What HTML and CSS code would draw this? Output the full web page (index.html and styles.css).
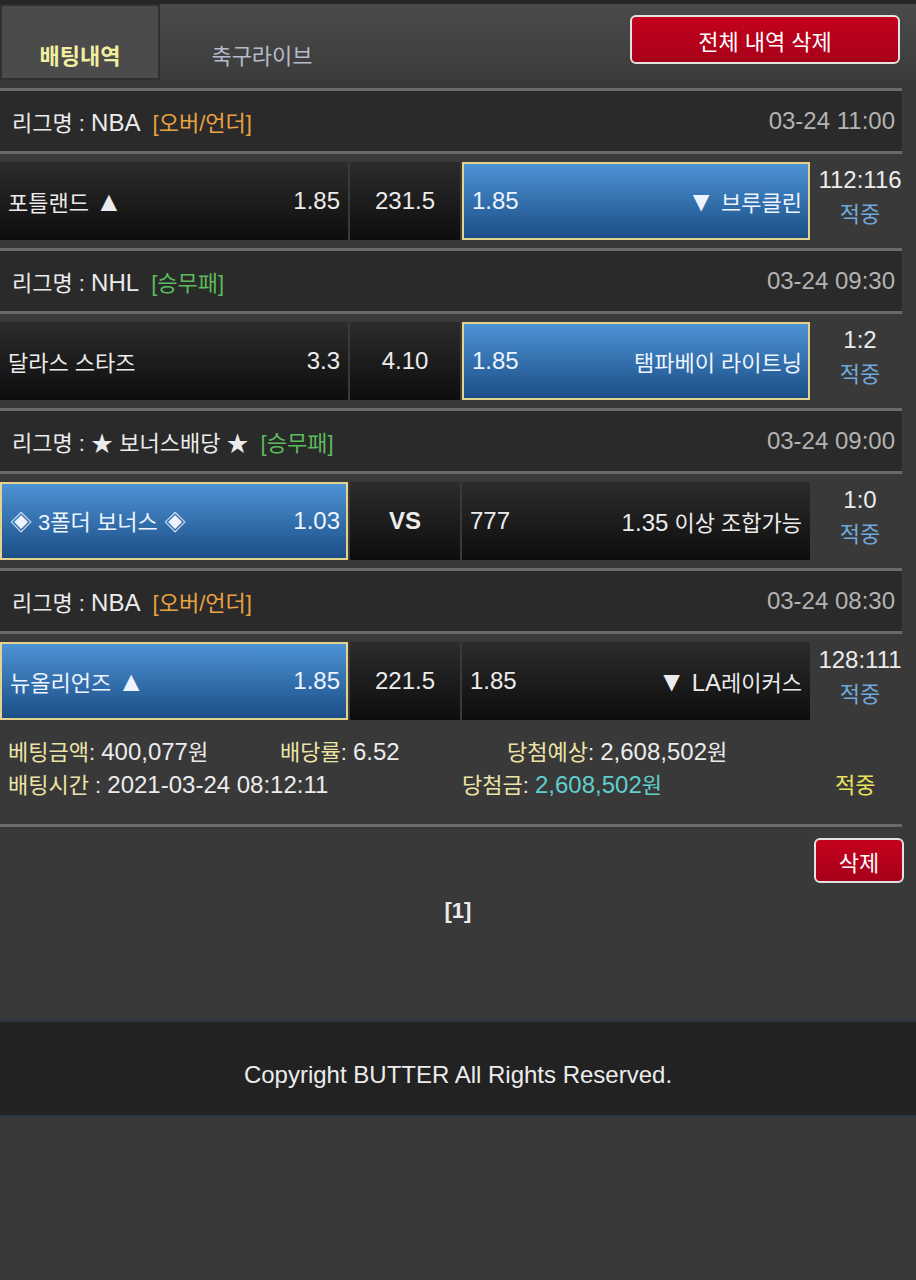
FILE: index.html
```html
<!DOCTYPE html>
<html lang="ko">
<head>
    <meta charset="UTF-8">
    <meta name="viewport" content="width=device-width, initial-scale=1.0">
    <title>배팅내역</title>
    <link rel="stylesheet" href="styles.css">
</head>
<body>
    <div class="top">
        <div class="tabs">
            <a class="tab active">배팅내역</a>
            <a class="tab">축구라이브</a>
        </div>
        <button class="btn-red btn-all">전체 내역 삭제</button>
    </div>

    <div class="list">
        <div class="league">
            <span>리그명 : <span class="num">NBA</span> <span class="type orange">[오버/언더]</span></span>
            <span class="date num">03-24 11:00</span>
        </div>
        <div class="match">
            <div class="cell side"><span>포틀랜드 <span class="arrow">▲</span></span><span class="num">1.85</span></div>
            <div class="cell mid num">231.5</div>
            <div class="cell side selected"><span class="num">1.85</span><span><span class="arrow">▼</span> 브루클린</span></div>
            <div class="result"><div class="num">112:116</div><div class="hit">적중</div></div>
        </div>

        <div class="league">
            <span>리그명 : <span class="num">NHL</span> <span class="type green">[승무패]</span></span>
            <span class="date num">03-24 09:30</span>
        </div>
        <div class="match">
            <div class="cell side"><span>달라스 스타즈</span><span class="num">3.3</span></div>
            <div class="cell mid num">4.10</div>
            <div class="cell side selected"><span class="num">1.85</span><span>탬파베이 라이트닝</span></div>
            <div class="result"><div class="num">1:2</div><div class="hit">적중</div></div>
        </div>

        <div class="league">
            <span>리그명 : ★ 보너스배당 ★ <span class="type green">[승무패]</span></span>
            <span class="date num">03-24 09:00</span>
        </div>
        <div class="match">
            <div class="cell side selected"><span>◈ 3폴더 보너스 ◈</span><span class="num">1.03</span></div>
            <div class="cell mid vs num">VS</div>
            <div class="cell side"><span class="num">777</span><span><span class="num">1.35</span> 이상 조합가능</span></div>
            <div class="result"><div class="num">1:0</div><div class="hit">적중</div></div>
        </div>

        <div class="league">
            <span>리그명 : <span class="num">NBA</span> <span class="type orange">[오버/언더]</span></span>
            <span class="date num">03-24 08:30</span>
        </div>
        <div class="match">
            <div class="cell side selected"><span>뉴올리언즈 <span class="arrow">▲</span></span><span class="num">1.85</span></div>
            <div class="cell mid num">221.5</div>
            <div class="cell side"><span class="num">1.85</span><span><span class="arrow">▼</span> <span class="num">LA</span>레이커스</span></div>
            <div class="result"><div class="num">128:111</div><div class="hit">적중</div></div>
        </div>

        <div class="summary">
            <div class="sum-row">
                <span class="c1"><span class="lbl">베팅금액</span>: <span class="num">400,077</span>원</span>
                <span class="c2"><span class="lbl">배당률</span>: <span class="num">6.52</span></span>
                <span><span class="lbl">당첨예상</span>: <span class="num">2,608,502</span>원</span>
            </div>
            <div class="sum-row">
                <span class="c3"><span class="lbl">배팅시간</span> : <span class="num">2021-03-24 08:12:11</span></span>
                <span class="c4"><span class="lbl">당첨금</span>: <span class="won"><span class="num">2,608,502</span>원</span></span>
                <span class="final">적중</span>
            </div>
        </div>
    </div>

    <div class="actions">
        <button class="btn-red btn-del">삭제</button>
    </div>
    <div class="paging">[1]</div>

    <footer class="footer">Copyright BUTTER All Rights Reserved.</footer>
</body>
</html>
```

FILE: styles.css
```css
body {
    margin: 0;
    background-color: #393939;
    color: #ececec;
    font-family: "Liberation Sans", "Noto Sans CJK KR", sans-serif;
    font-size: 22px;
}
/* latin text and digits render a bit larger than hangul on the original */
.num {
    font-size: 24px;
}
.arrow {
    font-size: 28px;
    line-height: 1;
}
.top {
    height: 76px;
    border-top: 4px solid #262626;
    background: linear-gradient(#4a4a4a, #3c3c3c);
    display: flex;
    justify-content: space-between;
    margin-bottom: 8px;
}
.tabs {
    display: flex;
}
.tab {
    width: 160px;
    display: flex;
    align-items: center;
    justify-content: center;
    padding-top: 24px;
    box-sizing: border-box;
    color: #b4bccb;
    font-size: 22px;
}
.tab.active {
    background-color: #4b4b4b;
    box-shadow: inset 0 0 0 2px #303030;
    color: #f2f0a0;
    font-weight: bold;
}
.tab + .tab {
    width: 204px;
}
.btn-red {
    background: linear-gradient(#c4021d, #a8001a);
    border: 2px solid #e2e2e2;
    border-radius: 6px;
    color: #fff;
    font-family: inherit;
    font-size: 22px;
    cursor: pointer;
}
.btn-all {
    width: 270px;
    height: 49px;
    margin: 11px 16px 0 0;
}
.list {
    width: 902px;
}
.league {
    height: 60px;
    border-top: 3px solid #6a6a6a;
    background-color: #2a2a2a;
    display: flex;
    align-items: center;
    justify-content: space-between;
    padding: 0 7px 0 12px;
}
.type {
    margin-left: 6px;
}
.orange {
    color: #e8a243;
}
.green {
    color: #5cba5c;
}
.date {
    color: #b3b3b3;
}
.match {
    border-top: 3px solid #6a6a6a;
    padding: 8px 0;
    display: flex;
    gap: 2px;
    height: 78px;
}
.cell {
    background: linear-gradient(#2c2c2c, #0d0d0d);
    display: flex;
    align-items: center;
    box-sizing: border-box;
}
.side {
    width: 348px;
    justify-content: space-between;
    padding: 0 8px;
}
.mid {
    width: 110px;
    justify-content: center;
}
.vs {
    font-weight: bold;
}
.selected {
    background: linear-gradient(#4d93d5, #1b4e86);
    border: 2px solid #e4d38e;
    padding: 0 6px 0 8px;
    color: #eef4ff;
}
.result {
    flex: 1;
    display: flex;
    flex-direction: column;
    align-items: center;
    justify-content: center;
    gap: 2px;
    padding: 0 0 8px 6px;
}
.hit {
    color: #70a8de;
}
.summary {
    padding: 5px 0 25px 8px;
    border-bottom: 3px solid #6a6a6a;
}
.sum-row {
    display: flex;
    height: 33px;
    align-items: center;
}
.lbl {
    color: #ece3a6;
}
.c1 { width: 272px; }
.c2 { width: 227px; }
.c3 { width: 454px; }
.c4 { width: 373px; }
.won {
    color: #5fcfcf;
}
.final {
    color: #ece25c;
}
.actions {
    display: flex;
    justify-content: flex-end;
    padding: 11px 12px 0 0;
}
.btn-del {
    width: 90px;
    height: 45px;
}
.paging {
    text-align: center;
    font-weight: bold;
    font-size: 22px;
    margin-top: 15px;
    height: 122px;
}
.footer {
    background-color: #222;
    border-top: 2px solid #2c3640;
    border-bottom: 2px solid #2c3640;
    height: 97px;
    box-sizing: border-box;
    display: flex;
    align-items: center;
    justify-content: center;
    padding-top: 12px;
    font-size: 24px;
}
```
